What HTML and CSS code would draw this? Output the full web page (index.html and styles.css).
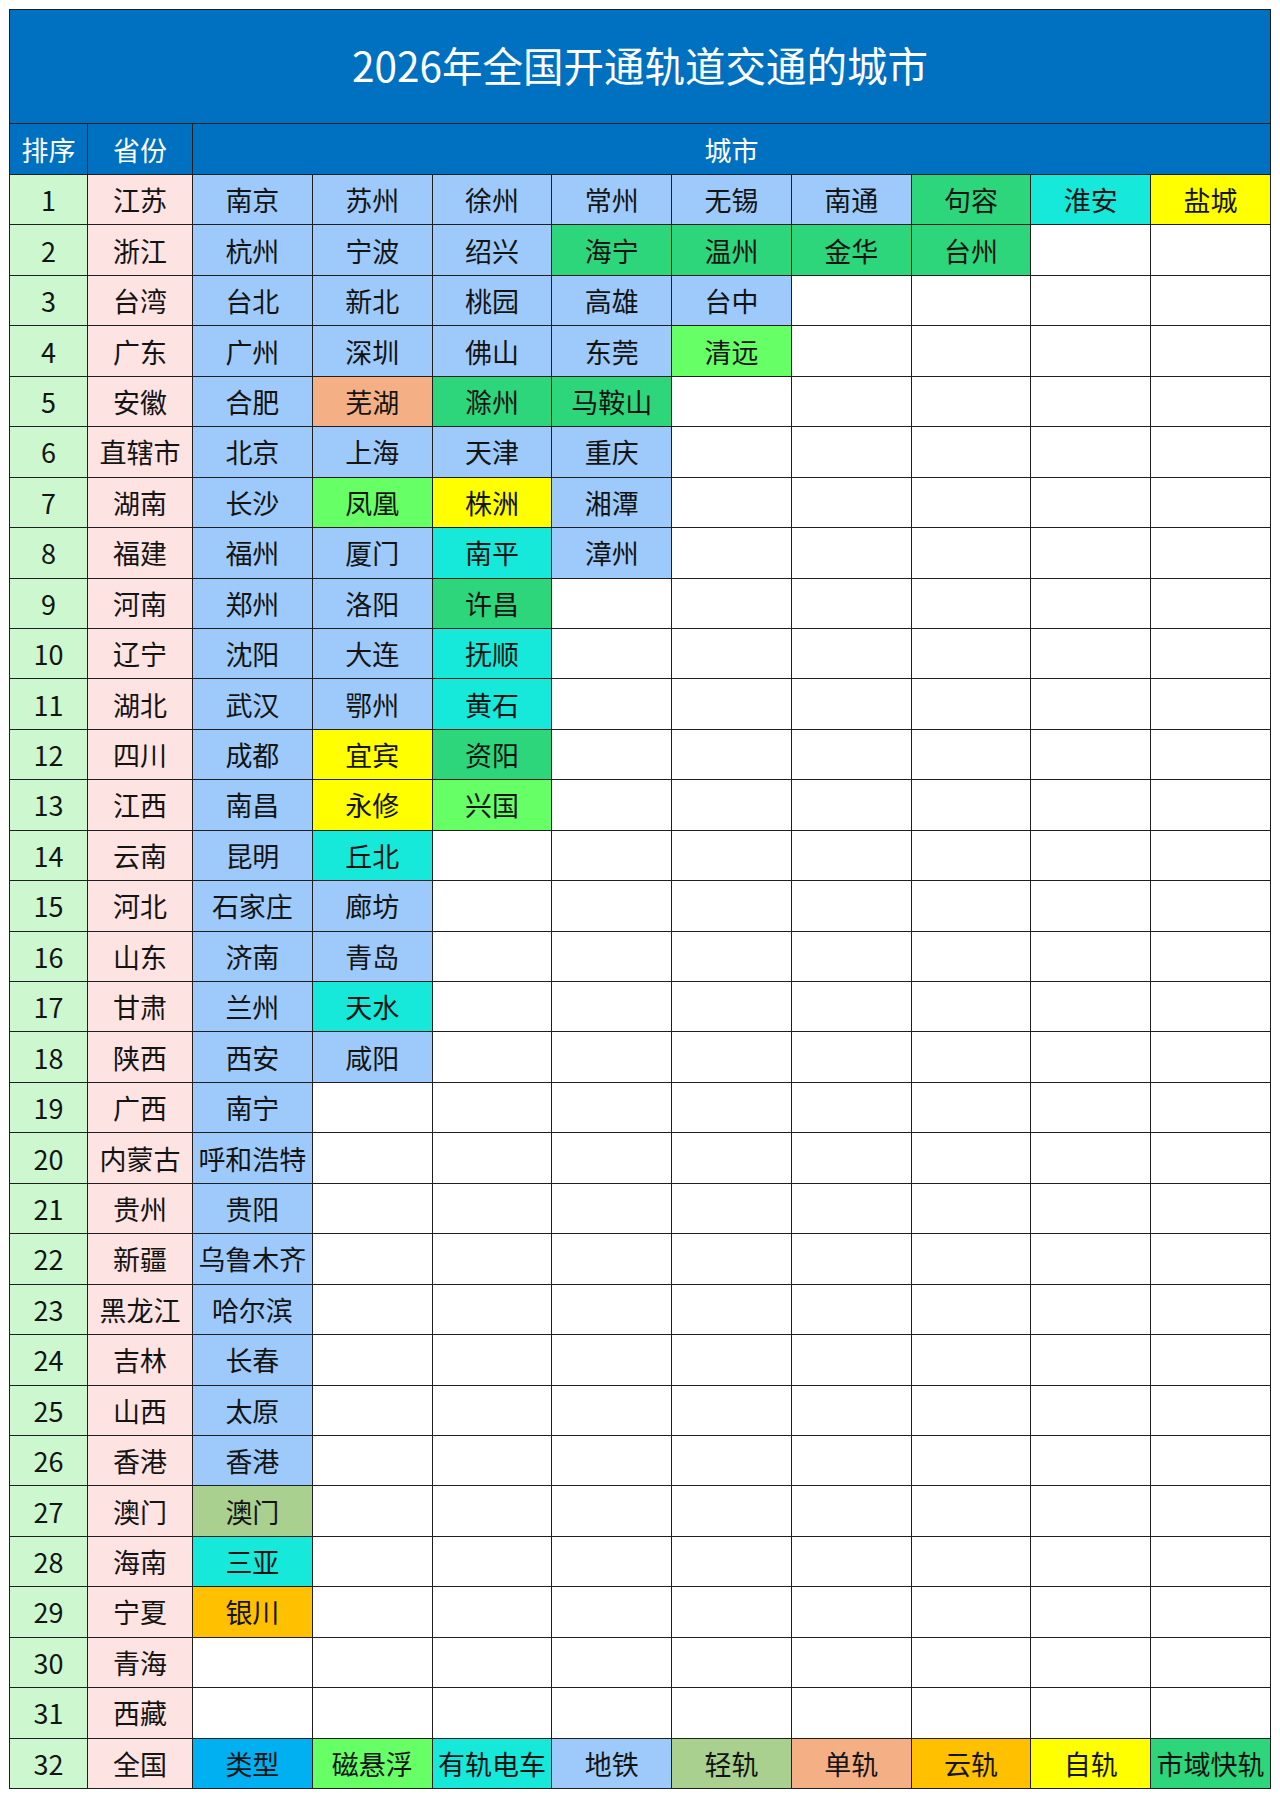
FILE: index.html
```html
<!DOCTYPE html>
<html lang="zh-CN">
<head>
<meta charset="utf-8">
<title>2026年全国开通轨道交通的城市</title>
<link rel="stylesheet" href="styles.css">
</head>
<body>
<div class="sheet">
  <div class="title">2026年全国开通轨道交通的城市</div>
  <div class="hd">排序</div><div class="hd">省份</div><div class="hd span9">城市</div>

  <div class="rk">1</div><div class="pv">江苏</div><div class="sub">南京</div><div class="sub">苏州</div><div class="sub">徐州</div><div class="sub">常州</div><div class="sub">无锡</div><div class="sub">南通</div><div class="csr">句容</div><div class="tram">淮安</div><div class="auto">盐城</div>
  <div class="rk">2</div><div class="pv">浙江</div><div class="sub">杭州</div><div class="sub">宁波</div><div class="sub">绍兴</div><div class="csr">海宁</div><div class="csr">温州</div><div class="csr">金华</div><div class="csr">台州</div><div class="e"></div><div class="e"></div>
  <div class="rk">3</div><div class="pv">台湾</div><div class="sub">台北</div><div class="sub">新北</div><div class="sub">桃园</div><div class="sub">高雄</div><div class="sub">台中</div><div class="e"></div><div class="e"></div><div class="e"></div><div class="e"></div>
  <div class="rk">4</div><div class="pv">广东</div><div class="sub">广州</div><div class="sub">深圳</div><div class="sub">佛山</div><div class="sub">东莞</div><div class="mag">清远</div><div class="e"></div><div class="e"></div><div class="e"></div><div class="e"></div>
  <div class="rk">5</div><div class="pv">安徽</div><div class="sub">合肥</div><div class="mono">芜湖</div><div class="csr">滁州</div><div class="csr">马鞍山</div><div class="e"></div><div class="e"></div><div class="e"></div><div class="e"></div><div class="e"></div>
  <div class="rk">6</div><div class="pv">直辖市</div><div class="sub">北京</div><div class="sub">上海</div><div class="sub">天津</div><div class="sub">重庆</div><div class="e"></div><div class="e"></div><div class="e"></div><div class="e"></div><div class="e"></div>
  <div class="rk">7</div><div class="pv">湖南</div><div class="sub">长沙</div><div class="mag">凤凰</div><div class="auto">株洲</div><div class="sub">湘潭</div><div class="e"></div><div class="e"></div><div class="e"></div><div class="e"></div><div class="e"></div>
  <div class="rk">8</div><div class="pv">福建</div><div class="sub">福州</div><div class="sub">厦门</div><div class="tram">南平</div><div class="sub">漳州</div><div class="e"></div><div class="e"></div><div class="e"></div><div class="e"></div><div class="e"></div>
  <div class="rk">9</div><div class="pv">河南</div><div class="sub">郑州</div><div class="sub">洛阳</div><div class="csr">许昌</div><div class="e"></div><div class="e"></div><div class="e"></div><div class="e"></div><div class="e"></div><div class="e"></div>
  <div class="rk">10</div><div class="pv">辽宁</div><div class="sub">沈阳</div><div class="sub">大连</div><div class="tram">抚顺</div><div class="e"></div><div class="e"></div><div class="e"></div><div class="e"></div><div class="e"></div><div class="e"></div>
  <div class="rk">11</div><div class="pv">湖北</div><div class="sub">武汉</div><div class="sub">鄂州</div><div class="tram">黄石</div><div class="e"></div><div class="e"></div><div class="e"></div><div class="e"></div><div class="e"></div><div class="e"></div>
  <div class="rk">12</div><div class="pv">四川</div><div class="sub">成都</div><div class="auto">宜宾</div><div class="csr">资阳</div><div class="e"></div><div class="e"></div><div class="e"></div><div class="e"></div><div class="e"></div><div class="e"></div>
  <div class="rk">13</div><div class="pv">江西</div><div class="sub">南昌</div><div class="auto">永修</div><div class="mag">兴国</div><div class="e"></div><div class="e"></div><div class="e"></div><div class="e"></div><div class="e"></div><div class="e"></div>
  <div class="rk">14</div><div class="pv">云南</div><div class="sub">昆明</div><div class="tram">丘北</div><div class="e"></div><div class="e"></div><div class="e"></div><div class="e"></div><div class="e"></div><div class="e"></div><div class="e"></div>
  <div class="rk">15</div><div class="pv">河北</div><div class="sub">石家庄</div><div class="sub">廊坊</div><div class="e"></div><div class="e"></div><div class="e"></div><div class="e"></div><div class="e"></div><div class="e"></div><div class="e"></div>
  <div class="rk">16</div><div class="pv">山东</div><div class="sub">济南</div><div class="sub">青岛</div><div class="e"></div><div class="e"></div><div class="e"></div><div class="e"></div><div class="e"></div><div class="e"></div><div class="e"></div>
  <div class="rk">17</div><div class="pv">甘肃</div><div class="sub">兰州</div><div class="tram">天水</div><div class="e"></div><div class="e"></div><div class="e"></div><div class="e"></div><div class="e"></div><div class="e"></div><div class="e"></div>
  <div class="rk">18</div><div class="pv">陕西</div><div class="sub">西安</div><div class="sub">咸阳</div><div class="e"></div><div class="e"></div><div class="e"></div><div class="e"></div><div class="e"></div><div class="e"></div><div class="e"></div>
  <div class="rk">19</div><div class="pv">广西</div><div class="sub">南宁</div><div class="e"></div><div class="e"></div><div class="e"></div><div class="e"></div><div class="e"></div><div class="e"></div><div class="e"></div><div class="e"></div>
  <div class="rk">20</div><div class="pv">内蒙古</div><div class="sub">呼和浩特</div><div class="e"></div><div class="e"></div><div class="e"></div><div class="e"></div><div class="e"></div><div class="e"></div><div class="e"></div><div class="e"></div>
  <div class="rk">21</div><div class="pv">贵州</div><div class="sub">贵阳</div><div class="e"></div><div class="e"></div><div class="e"></div><div class="e"></div><div class="e"></div><div class="e"></div><div class="e"></div><div class="e"></div>
  <div class="rk">22</div><div class="pv">新疆</div><div class="sub">乌鲁木齐</div><div class="e"></div><div class="e"></div><div class="e"></div><div class="e"></div><div class="e"></div><div class="e"></div><div class="e"></div><div class="e"></div>
  <div class="rk">23</div><div class="pv">黑龙江</div><div class="sub">哈尔滨</div><div class="e"></div><div class="e"></div><div class="e"></div><div class="e"></div><div class="e"></div><div class="e"></div><div class="e"></div><div class="e"></div>
  <div class="rk">24</div><div class="pv">吉林</div><div class="sub">长春</div><div class="e"></div><div class="e"></div><div class="e"></div><div class="e"></div><div class="e"></div><div class="e"></div><div class="e"></div><div class="e"></div>
  <div class="rk">25</div><div class="pv">山西</div><div class="sub">太原</div><div class="e"></div><div class="e"></div><div class="e"></div><div class="e"></div><div class="e"></div><div class="e"></div><div class="e"></div><div class="e"></div>
  <div class="rk">26</div><div class="pv">香港</div><div class="sub">香港</div><div class="e"></div><div class="e"></div><div class="e"></div><div class="e"></div><div class="e"></div><div class="e"></div><div class="e"></div><div class="e"></div>
  <div class="rk">27</div><div class="pv">澳门</div><div class="lrt">澳门</div><div class="e"></div><div class="e"></div><div class="e"></div><div class="e"></div><div class="e"></div><div class="e"></div><div class="e"></div><div class="e"></div>
  <div class="rk">28</div><div class="pv">海南</div><div class="tram">三亚</div><div class="e"></div><div class="e"></div><div class="e"></div><div class="e"></div><div class="e"></div><div class="e"></div><div class="e"></div><div class="e"></div>
  <div class="rk">29</div><div class="pv">宁夏</div><div class="cloud">银川</div><div class="e"></div><div class="e"></div><div class="e"></div><div class="e"></div><div class="e"></div><div class="e"></div><div class="e"></div><div class="e"></div>
  <div class="rk">30</div><div class="pv">青海</div><div class="e"></div><div class="e"></div><div class="e"></div><div class="e"></div><div class="e"></div><div class="e"></div><div class="e"></div><div class="e"></div><div class="e"></div>
  <div class="rk">31</div><div class="pv">西藏</div><div class="e"></div><div class="e"></div><div class="e"></div><div class="e"></div><div class="e"></div><div class="e"></div><div class="e"></div><div class="e"></div><div class="e"></div>
  <div class="rk">32</div><div class="pv">全国</div><div class="type">类型</div><div class="mag">磁悬浮</div><div class="tram">有轨电车</div><div class="sub">地铁</div><div class="lrt">轻轨</div><div class="mono">单轨</div><div class="cloud">云轨</div><div class="auto">自轨</div><div class="csr">市域快轨</div>
</div>
</body>
</html>
```

FILE: styles.css
```css
html, body {
  margin: 0;
  padding: 0;
  background: #ffffff;
}

body {
  padding: 9px 0 0 9px;
  font-family: "Noto Sans CJK SC", "Noto Sans", sans-serif;
  color: #141414;
}

.sheet {
  box-sizing: border-box;
  width: 1262px;
  display: grid;
  grid-template-columns: 77px 104px repeat(9, 1fr);
  grid-template-rows: 113px 50px;
  grid-auto-rows: 49.44px;
  gap: 1px;
  padding: 1px;
  background: #1f1f1f;
}

.sheet > div {
  display: flex;
  align-items: center;
  justify-content: center;
  font-size: 27px;
  line-height: 1;
  white-space: nowrap;
  background: #ffffff;
  overflow: hidden;
}

.sheet > .title {
  grid-column: 1 / -1;
  background: #0070c0;
  color: #ffffff;
  font-size: 40.5px;
  padding-bottom: 2px;
  box-sizing: border-box;
}

.sheet > .hd {
  background: #0070c0;
  color: #ffffff;
}

.sheet > .span9 {
  grid-column: 3 / -1;
}

.sheet > .rk { background: #ccf7cf; }
.sheet > .pv { background: #fde3e2; }
.sheet > .sub { background: #9dcafa; }
.sheet > .csr { background: #2dd67b; }
.sheet > .mag { background: #66ff66; }
.sheet > .tram { background: #16e8da; }
.sheet > .auto { background: #ffff00; }
.sheet > .lrt { background: #a9d08e; }
.sheet > .mono { background: #f4b084; }
.sheet > .cloud { background: #ffc000; }
.sheet > .type { background: #00b0f0; }
.sheet > .e { background: #ffffff; }
```
